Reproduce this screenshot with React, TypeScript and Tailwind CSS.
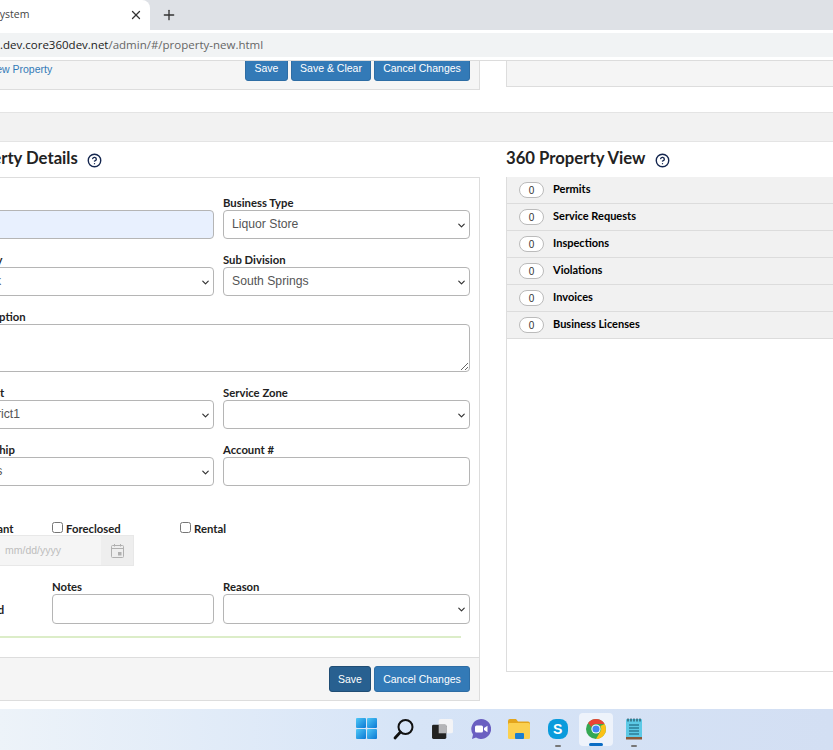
import React from "react";
import { X, Plus, CircleHelp, ChevronDown } from "lucide-react";

const inputCls = "block w-full h-[29px] border border-[#b5b5b5] rounded-[4px] bg-white px-[8px] text-[12.2px] text-[#555] font-['Liberation_Sans',sans-serif]";
const labelCls = "block h-[14px] leading-[13px] text-[11.3px] font-bold text-[#222] whitespace-nowrap font-['Lato',sans-serif]";
const btn = "h-[26px] pt-[1px] rounded-[3px] border border-[#2e6da4] bg-[#337ab7] text-white text-[10.5px] font-['Liberation_Sans',sans-serif] whitespace-nowrap";

function Field({ label, children, cls = "" }: { label: string; children: React.ReactNode; cls?: string }) {
  return (
    <div className={cls}>
      <span className={labelCls}>{label}</span>
      {children}
    </div>
  );
}

function Sel({ value, h = "" }: { value: string; h?: string }) {
  return (
    <div className="relative">
      <select className={inputCls + " appearance-none " + h} defaultValue={value}>
        <option value={value}>{value}</option>
      </select>
      <ChevronDown size={11} strokeWidth={2.6} className="absolute right-[3px] top-1/2 -translate-y-[5px] text-[#333]" />
    </div>
  );
}

function Help() {
  return <CircleHelp size={15} strokeWidth={2.2} className="text-[#14264f] mt-[4px]" />;
}

function Cal() {
  return (
    <svg width="13" height="14" viewBox="0 0 13 14" fill="none" stroke="#b0b0b0">
      <rect x="0.5" y="1.5" width="12" height="12" rx="1" />
      <path d="M0.5 4.5h12M3.5 0v2.5M9.5 0v2.5" />
      <rect x="7.5" y="8.5" width="2.5" height="2.5" fill="#b0b0b0" />
    </svg>
  );
}

function Win() {
  return (
    <svg width="21" height="21" viewBox="0 0 21 21">
      <defs>
        <linearGradient id="w" x1="0" y1="0" x2="1" y2="1">
          <stop offset="0" stopColor="#4fc8f7" />
          <stop offset="1" stopColor="#0a78d4" />
        </linearGradient>
      </defs>
      <rect x="0" y="0" width="10" height="10" rx="1" fill="url(#w)" />
      <rect x="11" y="0" width="10" height="10" rx="1" fill="url(#w)" />
      <rect x="0" y="11" width="10" height="10" rx="1" fill="url(#w)" />
      <rect x="11" y="11" width="10" height="10" rx="1" fill="url(#w)" />
    </svg>
  );
}

function SearchIco() {
  return (
    <svg width="22" height="22" viewBox="0 0 22 22" fill="none">
      <circle cx="12.5" cy="9" r="7" stroke="#111" strokeWidth="2" />
      <path d="M7.5 14 L2 20" stroke="#111" strokeWidth="2.8" strokeLinecap="round" />
    </svg>
  );
}

function TaskView() {
  return (
    <svg width="21" height="20" viewBox="0 0 22 21">
      <rect x="7" y="0" width="15" height="15" rx="2" fill="#f4f4f6" />
      <rect x="0" y="6" width="15" height="15" rx="1.5" fill="#222" />
      <rect x="7" y="6" width="8" height="9" fill="#b5b5b8" />
    </svg>
  );
}

function Teams() {
  return (
    <svg width="20" height="20" viewBox="0 0 20 20">
      <path d="M10 0a10 10 0 1 1-5 18.6L1 20l1-4.5A10 10 0 0 1 10 0z" fill="#6a5fc1" />
      <rect x="4" y="6.5" width="8" height="7" rx="1.5" fill="#fff" />
      <path d="M13 9l3.5-2.2v6.4L13 11z" fill="#fff" />
    </svg>
  );
}

function Explorer() {
  return (
    <svg width="22" height="20" viewBox="0 0 22 20">
      <path d="M0 2a2 2 0 0 1 2-2h6l2 2.5h10a2 2 0 0 1 2 2V8H0z" fill="#e3a51c" />
      <rect x="0" y="4" width="22" height="16" rx="1.5" fill="#fbd04f" />
      <rect x="7" y="14" width="9" height="6" rx="1" fill="#1b7fd0" />
    </svg>
  );
}

function Skype() {
  return (
    <div className="w-[20px] h-[20px] rounded-[8px] bg-[#0a9bdc] flex items-center justify-center text-white font-bold text-[14px] leading-none font-['Liberation_Sans',sans-serif]">
      S
    </div>
  );
}

function ChromeIco() {
  return (
    <svg width="20" height="20" viewBox="0 0 20 20">
      <circle cx="10" cy="10" r="10" fill="#34a853" />
      <path d="M10 0a10 10 0 0 1 8.66 5H10a5 5 0 0 0-4.6 3L2.1 3.9A10 10 0 0 1 10 0z" fill="#ea4335" />
      <path d="M18.66 5A10 10 0 0 1 10 20l4.3-7.5A5 5 0 0 0 14.3 7z" fill="#fbc116" />
      <circle cx="10" cy="10" r="4.6" fill="#fff" />
      <circle cx="10" cy="10" r="3.6" fill="#4285f4" />
    </svg>
  );
}

function Notepad() {
  return (
    <svg width="16" height="22" viewBox="0 0 16 22">
      <rect x="0" y="1" width="16" height="19" rx="1" fill="#5cc9e6" />
      <rect x="0" y="19" width="16" height="2.5" fill="#8a5a3a" />
      <path d="M2 0.5v3M5 0.5v3M8 0.5v3M11 0.5v3M14 0.5v3" stroke="#244b5a" strokeWidth="1.2" />
      <path d="M3 7h10M3 10h10M3 13h10M3 16h10" stroke="#13566e" strokeWidth="1.2" />
    </svg>
  );
}

const rows = ["Permits", "Service Requests", "Inspections", "Violations", "Invoices", "Business Licenses"];

export default function App() {
  return (
    <div className="w-[833px] h-[750px] overflow-hidden flex flex-col bg-white">
      {/* tab strip */}
      <div className="h-[30px] shrink-0 bg-[#dee1e6] flex items-center">
        <div className="w-[150px] h-full bg-white rounded-tr-[8px] flex items-center justify-between pr-[7px] overflow-hidden">
          <span className="-ml-[6px] text-[10.5px] text-[#444] font-['Open_Sans',sans-serif]">System</span>
          <X size={14} strokeWidth={2.2} className="text-[#333]" />
        </div>
        <Plus size={16} strokeWidth={2} className="ml-[11px] text-[#333]" />
      </div>
      {/* address bar */}
      <div className="h-[31px] shrink-0 bg-white py-[3px] border-b border-[#dcdcdc]">
        <div className="h-[24px] bg-[#f1f3f4] flex items-center text-[11.5px] whitespace-nowrap font-['Open_Sans',sans-serif] overflow-hidden">
          <span className="text-[#222]">.dev.core360dev.net</span>
          <span className="text-[#666]">/admin/#/property-new.html</span>
        </div>
      </div>

      <div className="flex-1 overflow-hidden">
        <div className="-ml-[43px] w-[930px] flex flex-col h-full">
          {/* top */}
          <div className="flex gap-[26px] h-[51px] shrink-0">
            <div className="w-[523px] h-[29px] bg-[#f5f5f5] border-r border-b border-[#ddd] flex items-start justify-between pl-[10px] pr-[9px]">
              <a className="mt-[1px] text-[10.5px] leading-[14px] text-[#337ab7] font-['Liberation_Sans',sans-serif]">Add New Property</a>
              <div className="flex gap-[3px] -mt-[6px]">
                <button className={btn + " w-[43px]"}>Save</button>
                <button className={btn + " w-[80px]"}>Save &amp; Clear</button>
                <button className={btn + " w-[96px]"}>Cancel Changes</button>
              </div>
            </div>
            <div className="flex-1 h-[26px] bg-[#f5f5f5] border-l border-b border-[#ddd]" />
          </div>
          {/* band */}
          <div className="h-[30px] shrink-0 bg-[#f2f2f2] border-y border-[#e4e4e4]" />
          {/* main */}
          <div className="flex gap-[26px] flex-1">
            <div className="w-[523px] flex flex-col">
              <div className="h-[35px] pb-[2px] flex items-center gap-[9px] text-[16.7px] leading-none font-bold text-[#222] font-['Lato',sans-serif]">
                Property Details <Help />
              </div>
              <div className="h-[524px] border border-[#ddd] flex flex-col">
                <div className="flex-1 pt-[18px] pl-[9px] pr-[9px]">
                  <div className="grid grid-cols-[247px_247px] gap-x-[9px] gap-y-[14px]">
                    <Field label="Name">
                      <div className={inputCls + " !bg-[#e8f0fe]"} />
                    </Field>
                    <Field label="Business Type"><Sel value="Liquor Store" /></Field>
                    <Field label="Facility"><Sel value="Park" /></Field>
                    <Field label="Sub Division"><Sel value="South Springs" /></Field>
                    <Field label="Description" cls="col-span-2">
                      <textarea className={inputCls + " !h-[48px]"} />
                    </Field>
                    <Field label="District"><Sel value="District1" /></Field>
                    <Field label="Service Zone"><Sel value="" /></Field>
                    <Field label="Township"><Sel value="Ours" /></Field>
                    <Field label="Account #">
                      <input className={inputCls} />
                    </Field>
                  </div>
                  <div className="mt-[35px] h-[14px] flex items-center">
                    <span className={labelCls + " ml-[12px] w-[73px] translate-y-[1px]"}>Vacant</span>
                    <label className="w-[128px] flex items-center gap-[3px] -translate-y-[1px]">
                      <input type="checkbox" className="w-[11px] h-[11px] m-0" />
                      <span className={labelCls + " translate-y-[2px]"}>Foreclosed</span>
                    </label>
                    <label className="flex items-center gap-[3px] -translate-y-[1px]">
                      <input type="checkbox" className="w-[11px] h-[11px] m-0" />
                      <span className={labelCls + " translate-y-[2px]"}>Rental</span>
                    </label>
                  </div>
                  <div className="w-[167px] h-[31px] bg-[#f5f5f5] border border-[#e8e8e8] flex items-center justify-between pl-[37px] text-[10.5px] text-[#bdbdbd] font-['Liberation_Sans',sans-serif]">
                    mm/dd/yyyy
                    <div className="w-[32px] h-full bg-[#eee] flex items-center justify-center">
                      <Cal />
                    </div>
                  </div>
                  <div className="mt-[14px] grid grid-cols-[85px_162px_247px] gap-x-0">
                    <span className={labelCls + " mt-[23px] -ml-[12px]"}>Approved</span>
                    <Field label="Notes">
                      <input className={inputCls + " !h-[30px]"} />
                    </Field>
                    <Field label="Reason" cls="ml-[9px] -mr-[9px]">
                      <Sel value="" h="!h-[30px]" />
                    </Field>
                  </div>
                  <div className="mt-[12px] h-[2px] w-[494px] bg-[#dcedc8]" />
                </div>
                <div className="h-[43px] bg-[#f5f5f5] border-t border-[#ddd] flex items-center justify-end gap-[3px] pr-[9px]">
                  <button className={btn + " w-[42px] !bg-[#286090] !border-[#204d74]"}>Save</button>
                  <button className={btn + " w-[96px]"}>Cancel Changes</button>
                </div>
              </div>
            </div>
            <div className="flex-1 flex flex-col">
              <div className="h-[35px] pb-[2px] flex items-center gap-[9px] text-[16.7px] leading-none font-bold text-[#222] font-['Lato',sans-serif]">
                360 Property View <Help />
              </div>
              <div className="h-[495px] border-l border-b border-[#ddd]">
                {rows.map((r) => (
                  <div key={r} className="h-[27px] bg-[#f1f1f1] border-b border-[#dcdcdc] flex items-center pl-[12px] gap-[9px]">
                    <span className="w-[25px] h-[16px] rounded-full border border-[#bbb] bg-white flex items-center justify-center text-[10px] text-[#333] font-['Liberation_Sans',sans-serif]">0</span>
                    <span className="pb-[2px] text-[11px] font-bold text-black font-['Lato',sans-serif]">{r}</span>
                  </div>
                ))}
              </div>
            </div>
          </div>
        </div>
      </div>

      {/* taskbar */}
      <div className="h-[41px] shrink-0 bg-gradient-to-r from-[#edf3f9] via-[#d6e4f7] to-[#d3dff3] flex items-center pl-[347px]">
        {[<Win />, <SearchIco />, <TaskView />, <Teams />, <Explorer />, <Skype />, <ChromeIco />, <Notepad />].map((ico, i) => (
          <div key={i} className="w-[38.3px] h-[33px] flex items-center justify-center relative">
            {i === 6 ? <span className="absolute inset-y-0 left-[2px] right-[2px] rounded-[4px] bg-white/60" /> : null}
            <span className="relative -translate-y-[1px]">{ico}</span>
            {i === 5 || i === 7 ? <span className="absolute bottom-[-1px] w-[6px] h-[2px] rounded bg-[#777]" /> : null}
            {i === 6 ? <span className="absolute bottom-[0px] w-[14px] h-[3px] rounded bg-[#0a6cc4]" /> : null}
          </div>
        ))}
      </div>
    </div>
  );
}
